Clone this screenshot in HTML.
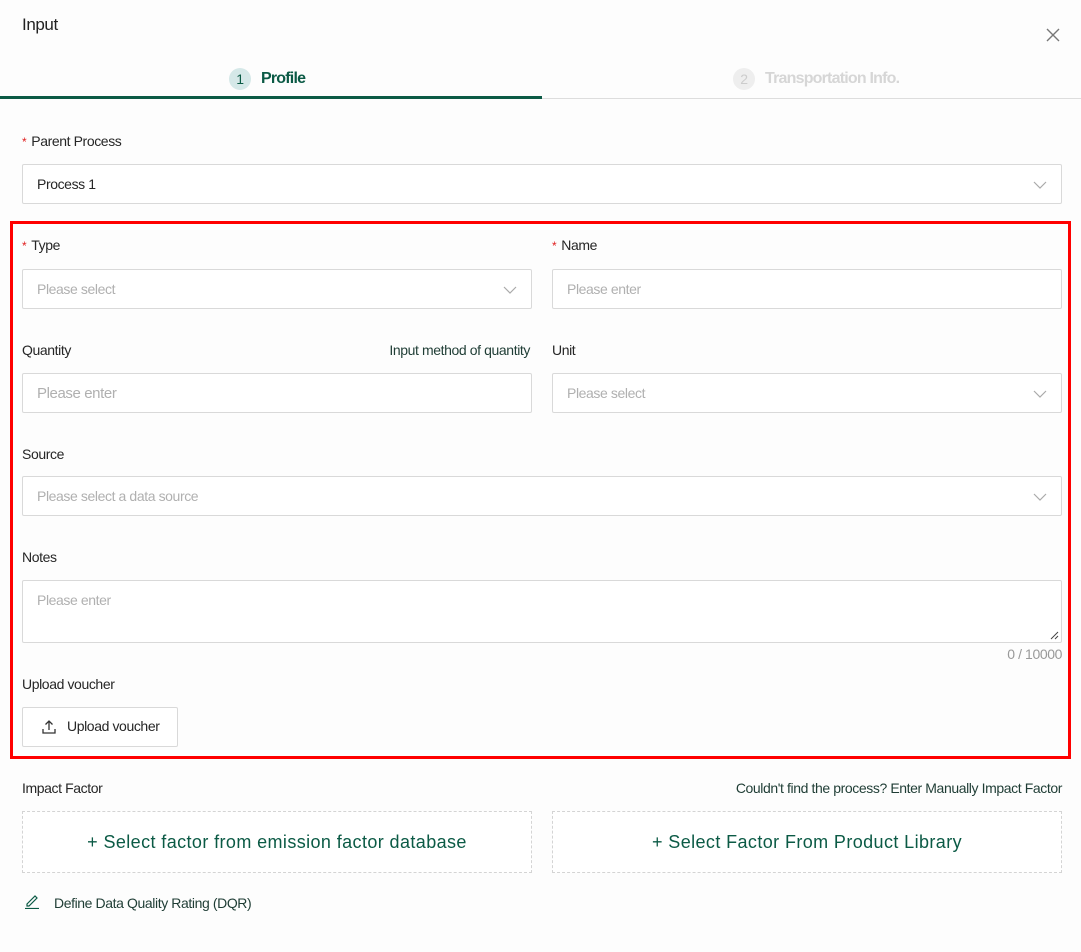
<!DOCTYPE html>
<html><head><meta charset="utf-8"><style>
*{box-sizing:border-box;margin:0;padding:0}
body{width:1081px;height:952px;background:#fdfdfd;font-family:"Liberation Sans",sans-serif;font-size:14px;color:#222;position:relative;overflow:hidden;letter-spacing:-0.4px}
.a{position:absolute;white-space:nowrap}
.lbl{font-size:14px;color:#262626}
.req{color:#e02020;margin-right:5px;font-size:12px}
.box{position:absolute;border:1px solid #d9d9d9;background:#fff;border-radius:2px;height:40px}
.ph{position:absolute;left:14px;top:11px;color:#b0b0b0;font-size:14px;white-space:nowrap}
.chev{position:absolute;right:14px;top:13px}
.green{color:#0b5a45}
.dash{position:absolute;border:1px dashed #d4d4d4;height:62px;top:811px;font-size:18px;letter-spacing:0.4px;color:#0b5a45;text-align:center;line-height:60px;background:#fff}
</style></head><body>
<div class="a" style="left:22px;top:15px;font-size:17px;color:#222">Input</div>
<svg class="a" style="left:1046px;top:28px" width="14" height="14" viewBox="0 0 14 14"><path d="M1 1L13 13M13 1L1 13" stroke="#777" stroke-width="1.4"/></svg>
<div class="a" style="left:229px;top:68px;width:22px;height:22px;border-radius:50%;background:#d5e8e8;color:#0b5a45;text-align:center;line-height:22px;font-size:14px">1</div>
<div class="a" style="left:261px;top:70px;font-size:16px;font-weight:bold;color:#0b5a45;letter-spacing:-0.8px">Profile</div>
<div class="a" style="left:733px;top:68px;width:22px;height:22px;border-radius:50%;background:#eee;color:#ccc;text-align:center;line-height:22px;font-size:14px">2</div>
<div class="a" style="left:765px;top:70px;font-size:16px;font-weight:bold;color:#d6d6d6;letter-spacing:-0.8px">Transportation Info.</div>
<div class="a" style="left:0;top:98px;width:1081px;height:1px;background:#ddd"></div>
<div class="a" style="left:0;top:96px;width:542px;height:3px;background:#0b5a45"></div>

<div class="a lbl" style="left:22px;top:133px"><span class="req">*</span>Parent Process</div>
<div class="box" style="left:22px;top:164px;width:1040px"><span class="ph" style="color:#262626">Process 1</span><svg class="chev" width="14" height="14" viewBox="0 0 14 14"><path d="M1 4L7 10L13 4" fill="none" stroke="#aaa" stroke-width="1.2"/></svg></div>

<div class="a" style="left:10px;top:221px;width:1061px;height:538px;border:3px solid #f00"></div>

<div class="a lbl" style="left:22px;top:237px"><span class="req">*</span>Type</div>
<div class="a lbl" style="left:552px;top:237px"><span class="req">*</span>Name</div>
<div class="box" style="left:22px;top:269px;width:510px"><span class="ph">Please select</span><svg class="chev" width="14" height="14" viewBox="0 0 14 14"><path d="M1 4L7 10L13 4" fill="none" stroke="#aaa" stroke-width="1.2"/></svg></div>
<div class="box" style="left:552px;top:269px;width:510px"><span class="ph">Please enter</span></div>

<div class="a lbl" style="left:22px;top:342px">Quantity</div>
<div class="a" style="left:330px;top:342px;width:200px;text-align:right;color:#1f3d35">Input method of quantity</div>
<div class="a lbl" style="left:552px;top:342px">Unit</div>
<div class="box" style="left:22px;top:373px;width:510px"><span class="ph" style="font-size:15px">Please enter</span></div>
<div class="box" style="left:552px;top:373px;width:510px"><span class="ph">Please select</span><svg class="chev" width="14" height="14" viewBox="0 0 14 14"><path d="M1 4L7 10L13 4" fill="none" stroke="#aaa" stroke-width="1.2"/></svg></div>

<div class="a lbl" style="left:22px;top:446px">Source</div>
<div class="box" style="left:22px;top:476px;width:1040px"><span class="ph">Please select a data source</span><svg class="chev" width="14" height="14" viewBox="0 0 14 14"><path d="M1 4L7 10L13 4" fill="none" stroke="#aaa" stroke-width="1.2"/></svg></div>

<div class="a lbl" style="left:22px;top:549px">Notes</div>
<div class="box" style="left:22px;top:580px;width:1040px;height:63px"><span class="ph">Please enter</span><svg class="a" style="right:2px;bottom:2px" width="9" height="9" viewBox="0 0 9 9"><path d="M8 1L1 8M8 5L5 8" stroke="#444" stroke-width="1"/></svg></div>
<div class="a" style="left:962px;top:646px;width:100px;text-align:right;color:#999">0 / 10000</div>

<div class="a lbl" style="left:22px;top:676px">Upload voucher</div>
<div class="box" style="left:22px;top:707px;width:156px"><svg class="a" style="left:19px;top:12px" width="14" height="14" viewBox="0 0 14 14"><path d="M7 10V1M3.5 4.5L7 1L10.5 4.5M1 9V13H13V9" fill="none" stroke="#333" stroke-width="1.3"/></svg><span class="a" style="left:44px;top:10px;color:#262626">Upload voucher</span></div>

<div class="a lbl" style="left:22px;top:780px">Impact Factor</div>
<div class="a" style="left:662px;top:780px;width:400px;text-align:right;color:#1f3d35">Couldn't find the process? Enter Manually Impact Factor</div>
<div class="dash" style="left:22px;width:510px">+ Select factor from emission factor database</div>
<div class="dash" style="left:552px;width:510px">+ Select Factor From Product Library</div>

<svg class="a" style="left:24px;top:893px" width="16" height="16" viewBox="0 0 16 16"><path d="M3 11L11 3L13 5L5 13H3Z" fill="none" stroke="#0b5a45" stroke-width="1.2"/><path d="M1 15.5H15" stroke="#0b5a45" stroke-width="1.2"/></svg>
<div class="a" style="left:54px;top:895px;color:#1f3d35">Define Data Quality Rating (DQR)</div>
</body></html>
